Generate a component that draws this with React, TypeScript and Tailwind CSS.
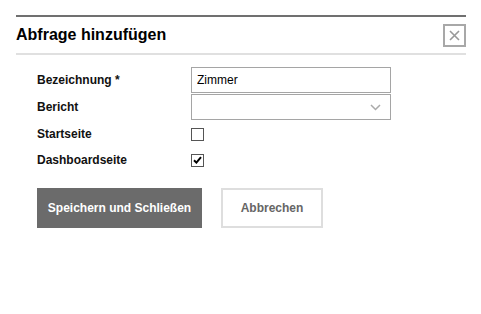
import React from 'react'

const labelCls = "w-[154px] shrink-0 text-[12px] font-bold text-[#111]"

const CheckBox: React.FC<{ checked?: boolean }> = ({ checked }) => (
  <span className="flex h-[13px] w-[13px] items-center justify-center border border-[#555] bg-white">
    {checked && (
      <svg width="9" height="8" viewBox="0 0 9 8">
        <path d="M1 4.2 L3.4 6.6 L8 1.2" fill="none" stroke="#000" strokeWidth="2" />
      </svg>
    )}
  </span>
)

export default function App() {
  return (
    <div className="h-[314px] w-[481px] bg-white pt-[15px] pl-[16px]" style={{ fontFamily: '"Liberation Sans", Arial, sans-serif' }}>
      <div className="w-[450px]">
        {/* Header */}
        <div className="flex h-[40px] items-center justify-between border-t-2 border-b-2 border-t-[#707070] border-b-[#e0e0e0]">
          <h1 className="text-[16px] font-bold text-black">Abfrage hinzufügen</h1>
          <button className="flex h-[23px] w-[23px] items-center justify-center border-2 border-[#a8a8a8] bg-white">
            <svg width="11" height="11" viewBox="0 0 11 11">
              <path d="M1 1 L10 10 M10 1 L1 10" stroke="#999" strokeWidth="1.6" />
            </svg>
          </button>
        </div>

        {/* Form */}
        <div className="pl-[21px] pt-[12px]">
          <div className="mb-[1px] flex h-[26px] items-center">
            <span className={labelCls}>Bezeichnung *</span>
            <input
              defaultValue="Zimmer"
              className="h-[26px] w-[200px] border border-[#a5a5a5] px-[5px] text-[12px] text-black outline-none"
            />
          </div>
          <div className="mb-[1px] flex h-[26px] items-center">
            <span className={labelCls}>Bericht</span>
            <div className="relative h-[26px] w-[200px] border border-[#a5a5a5] bg-white">
              <svg className="absolute right-[9px] top-[9px]" width="11" height="7" viewBox="0 0 11 7">
                <path d="M1 1 L5.5 5.5 L10 1" fill="none" stroke="#aaa" strokeWidth="1.5" />
              </svg>
            </div>
          </div>
          <div className="flex h-[26px] items-center">
            <span className={labelCls}>Startseite</span>
            <CheckBox />
          </div>
          <div className="flex h-[26px] items-center">
            <span className={labelCls}>Dashboardseite</span>
            <CheckBox checked />
          </div>
        </div>

        {/* Buttons */}
        <div className="flex gap-[19px] pl-[21px] pt-[15px]">
          <button className="h-[40px] w-[165px] bg-[#6b6b6b] text-[12px] font-bold text-white">
            Speichern und Schließen
          </button>
          <button className="h-[40px] w-[102px] border-2 border-[#dedede] bg-white text-[12px] font-bold text-[#666]">
            Abbrechen
          </button>
        </div>
      </div>
    </div>
  )
}
